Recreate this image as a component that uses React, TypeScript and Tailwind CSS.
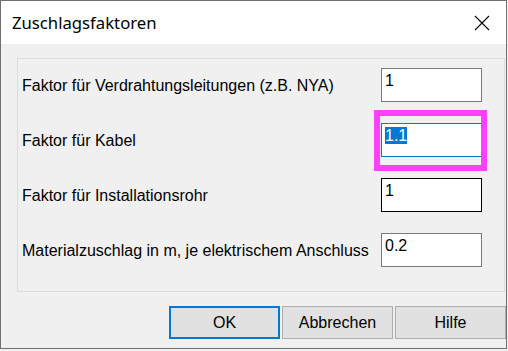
import React from 'react';

const rows = [
  { label: 'Faktor für Verdrahtungsleitungen (z.B. NYA)', value: '1', kind: 'normal' },
  { label: 'Faktor für Kabel', value: '1.1', kind: 'focus' },
  { label: 'Faktor für Installationsrohr', value: '1', kind: 'hover' },
  { label: 'Materialzuschlag in m, je elektrischem Anschluss', value: '0.2', kind: 'normal' },
];

function Field({ value, kind }: { value: string; kind: string }) {
  const border =
    kind === 'focus' ? 'border-[#0078d7]' : kind === 'hover' ? 'border-[#000000]' : 'border-[#7a7a7a]';
  const box = (
    <div className={`w-[101px] h-[34px] border bg-white px-[3px] pt-[2px] text-[16px] leading-[19px] ${border}`}>
      {kind === 'focus' ? <span className="bg-[#0078d7] text-white">{value}</span> : value}
    </div>
  );
  if (kind !== 'focus') return box;
  return (
    <div className="relative">
      {box}
      <div className="absolute left-[-7px] top-[-13px] w-[113px] h-[61px] border-[6px] border-[#ff40ff]" />
    </div>
  );
}

export default function App() {
  return (
    <div
      className="w-[508px] h-[351px] bg-[#f0f0f0] text-black"
      style={{ fontFamily: '"Liberation Sans", Arial, sans-serif' }}
    >
      <div className="w-[507px] h-[349px] border border-[#707070] flex flex-col">
        {/* Title bar */}
        <div className="h-[43px] bg-white flex items-center justify-between pl-[11px] pr-[16px]">
          <span className="text-[16.7px]" style={{ fontFamily: '"Noto Sans", sans-serif' }}>
            Zuschlagsfaktoren
          </span>
          <svg width="16" height="16" viewBox="0 0 16 16" className="mt-[1px]">
            <path d="M1 1 L15 15 M15 1 L1 15" stroke="#000" strokeWidth="1.1" fill="none" />
          </svg>
        </div>

        {/* Group box */}
        <div className="ml-[16px] mt-[14px] w-[488px] h-[234px] border border-[#dcdcdc] flex flex-col pl-[4px] pt-[9px] gap-[21px]">
          {rows.map((r) => (
            <div key={r.label} className="flex items-center justify-between pr-[22px]">
              <span className="text-[16px] leading-[19px]">{r.label}</span>
              <Field value={r.value} kind={r.kind} />
            </div>
          ))}
        </div>

        {/* Buttons */}
        <div className="flex justify-end gap-[2px] mt-[14px]">
          <button className="w-[111px] h-[33px] border-2 border-[#0078d7] bg-[#e1e1e1] text-[16px]">OK</button>
          <button className="w-[111px] h-[33px] border border-[#adadad] bg-[#e1e1e1] text-[16px]">Abbrechen</button>
          <button className="w-[111px] h-[33px] border border-[#adadad] bg-[#e1e1e1] text-[16px]">Hilfe</button>
        </div>
      </div>
    </div>
  );
}
